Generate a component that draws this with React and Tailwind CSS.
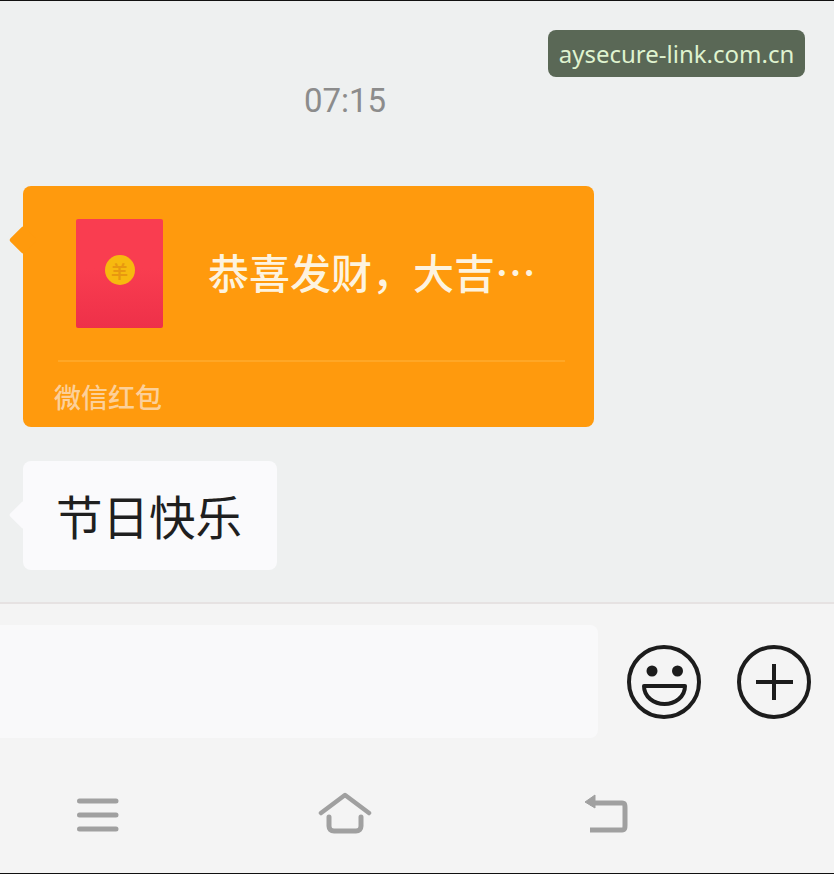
import React from 'react';

const cjk = '"Noto Sans CJK SC", "Liberation Sans", sans-serif';

const Coin = () => (
    <div className="flex h-[30px] w-[30px] items-center justify-center rounded-full bg-[#f7b90f] text-[17px] font-bold leading-none text-[#e8980f]" style={{ fontFamily: cjk }}>
        羊
    </div>
);

const Tail = ({ color }) => (
    <div className={`absolute left-[-10px] top-[44px] h-[20px] w-[20px] rotate-45 rounded-[2px] ${color}`} />
);

const RedPacket = () => (
    <div className="relative ml-[23px] mt-[65px] flex h-[241px] w-[571px] flex-col rounded-lg bg-[#ff9a0d]">
        <Tail color="bg-[#ff9a0d]" />
        <div className="relative flex items-start pl-[53px] pt-[33px]">
            <div className="flex h-[109px] w-[87px] justify-center rounded-[2px] bg-gradient-to-b from-[#f93d50] via-[#f93d50] via-45% to-[#ee3049] pt-[36px]">
                <Coin />
            </div>
            <span className="ml-[45px] mt-[24px] text-[41px] font-medium leading-[56px] text-[#fdf3df]">恭喜发财，大吉…</span>
        </div>
        <div className="relative ml-[35px] mr-[29px] mt-[32px] h-[2px] bg-[#ffa726]" />
        <span className="relative ml-[31px] mt-[16px] text-[27px] font-medium leading-[38px] text-[#fcd09a]">微信红包</span>
    </div>
);

const TextBubble = () => (
    <div className="relative ml-[23px] mt-[34px] flex h-[109px] w-[254px] items-center rounded-lg bg-[#fafafc] pl-[33px]">
        <Tail color="bg-[#fafafc]" />
        <span className="relative text-[46.5px] leading-none text-[#1f1f1f]">节日快乐</span>
    </div>
);

const SmileIcon = () => (
    <svg width="74" height="74" viewBox="0 0 74 74" fill="none" stroke="#1c1c1c">
        <circle cx="37" cy="37" r="35" strokeWidth="4" />
        <circle cx="25" cy="26" r="5.5" fill="#1c1c1c" stroke="none" />
        <circle cx="50.5" cy="26" r="5.5" fill="#1c1c1c" stroke="none" />
        <path d="M17 41H58C58 52 48 59 37.500 59C27 59 17 52 17 41Z" strokeWidth="4" strokeLinejoin="round" />
    </svg>
);

const PlusIcon = () => (
    <svg width="74" height="74" viewBox="0 0 74 74" fill="none" stroke="#1c1c1c" strokeWidth="4">
        <circle cx="37" cy="37" r="35" />
        <path d="M19 37H56M37 19V55" />
    </svg>
);

const MenuIcon = () => (
    <svg width="43" height="36" viewBox="0 0 43 36" fill="none" stroke="#a0a0a0" strokeWidth="5" strokeLinecap="round">
        <path d="M3.500 4H40M3.500 18H40M3.500 32H40" />
    </svg>
);

const HomeIcon = () => (
    <svg width="54" height="42" viewBox="0 0 54 42" fill="none" stroke="#a0a0a0" strokeLinecap="round" strokeLinejoin="round">
        <path d="M3 21L27 3L51 21" strokeWidth="4.500" />
        <path d="M11 25V34C11 37 13 39 16 39H38C41 39 43 37 43 34V25" strokeWidth="5" />
    </svg>
);

const BackIcon = () => (
    <svg width="46" height="40" viewBox="0 0 46 40" fill="none" stroke="#a0a0a0" strokeLinejoin="round">
        <path d="M6 10H38C41 10 41 12 41 15V32C41 35 41 37 38 37H6" strokeWidth="5" />
        <path d="M1 9L11 2V15Z" fill="#a0a0a0" strokeWidth="1" />
    </svg>
);

const App = () => {
    return (
        <div className="relative flex h-[874px] w-[834px] flex-col overflow-hidden border-y border-[#111] bg-[#eef0f0]" style={{ fontFamily: cjk }}>
            <div className="absolute left-[548px] top-[29px] z-10 flex h-[47px] w-[257px] items-center justify-center rounded-lg bg-[#5a6856] text-[24px] leading-none text-[#dff3cf]" style={{ fontFamily: '"Noto Sans", sans-serif' }}>
                aysecure-link.com.cn
            </div>

            <section className="h-[601px] shrink-0 pt-[80px]">
                <div className="w-[690px] text-center text-[33px] leading-[40px] text-[#8c8c8c]" style={{ fontFamily: '"Roboto", sans-serif' }}>07:15</div>
                <RedPacket />
                <TextBubble />
            </section>

            <section className="flex flex-1 flex-col border-t-2 border-[#e6e2e2] bg-[#f4f4f4]">
                <div className="mt-[21px] flex items-center">
                    <div className="h-[113px] w-[598px] rounded-r-lg bg-[#f9f9fa]" />
                    <div className="ml-[29px] flex gap-[36px]">
                        <SmileIcon />
                        <PlusIcon />
                    </div>
                </div>
                <nav className="mt-[54px] flex items-center pl-[76px]">
                    <div className="mt-[3px]"><MenuIcon /></div>
                    <div className="ml-[199px]"><HomeIcon /></div>
                    <div className="ml-[212px]"><BackIcon /></div>
                </nav>
            </section>
        </div>
    );
};

export default App;
